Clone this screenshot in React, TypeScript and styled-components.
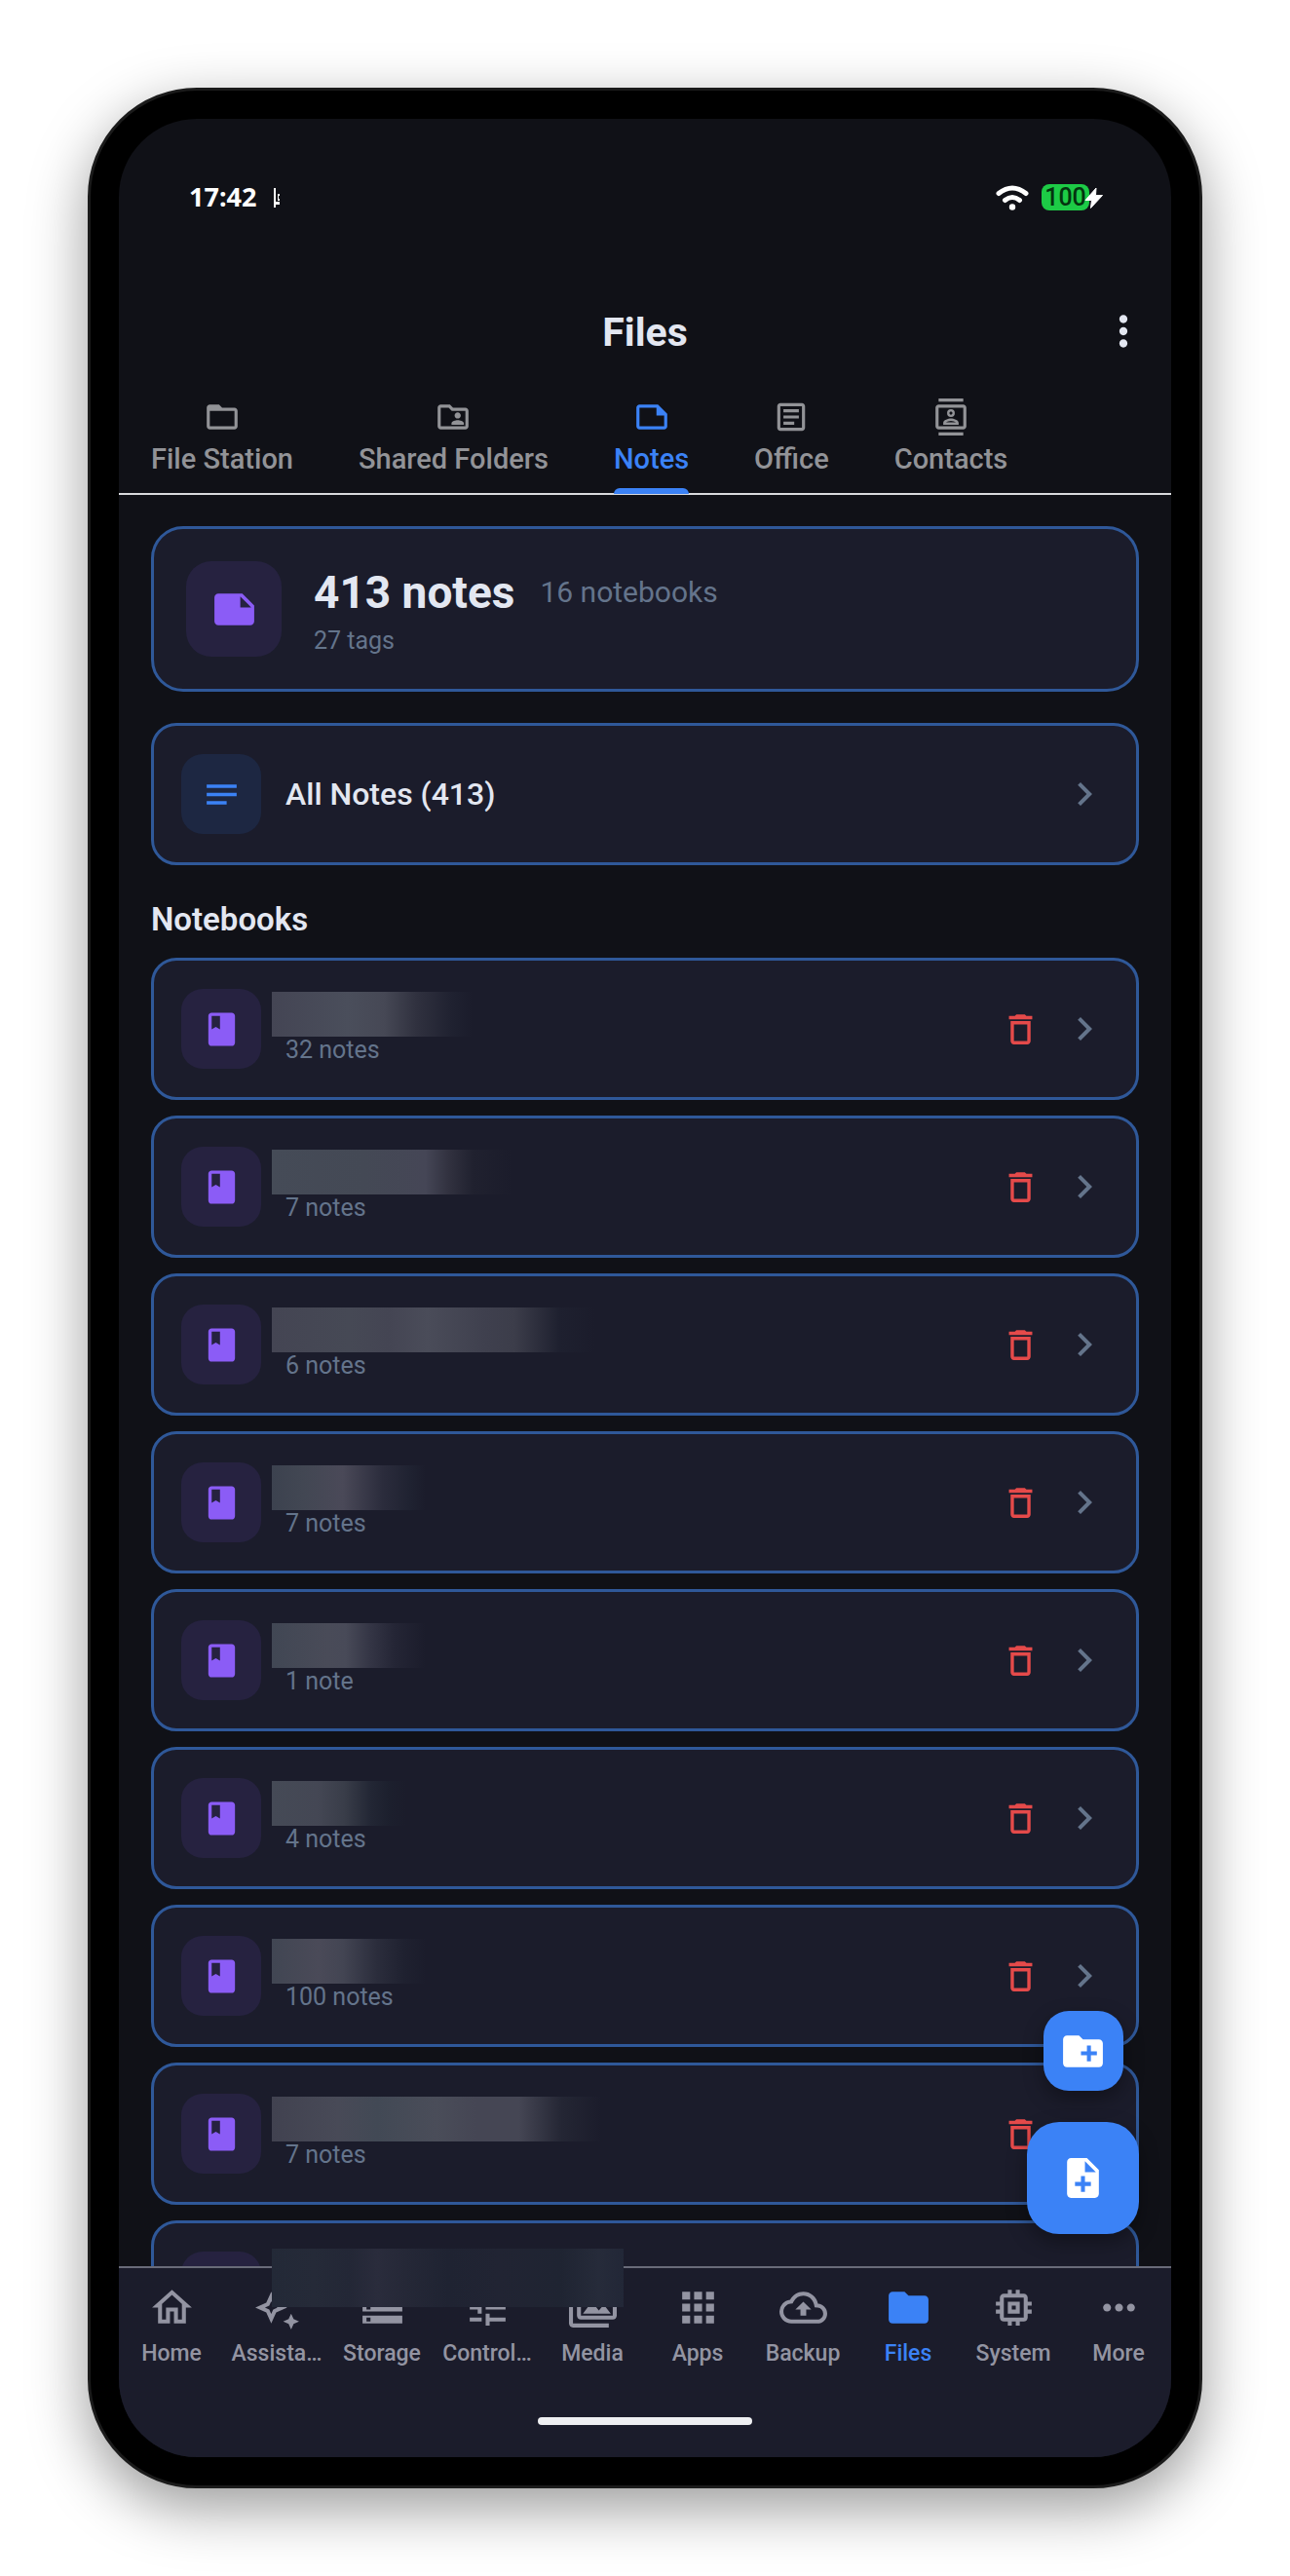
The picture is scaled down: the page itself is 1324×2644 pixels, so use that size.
import React from "react";
import styled, { createGlobalStyle } from "styled-components";
import {
  MdApps,
  MdBook,
  MdChevronRight,
  MdCreateNewFolder,
  MdFolder,
  MdFolderOpen,
  MdMemory,
  MdMoreHoriz,
  MdMoreVert,
  MdNote,
  MdNoteAdd,
  MdNotes,
  MdOutlineArticle,
  MdOutlineAutoAwesome,
  MdOutlineBackup,
  MdOutlineContacts,
  MdOutlineDelete,
  MdOutlineFolderShared,
  MdOutlineHome,
  MdOutlineNote,
  MdOutlinePermMedia,
  MdOutlineStorage,
  MdTune,
} from "react-icons/md";
import type { IconType } from "react-icons";

const color = {
  screen: "#101117",
  surface: "#1b1c2b",
  line: "#2f5899",
  text: "#e3e7f1",
  muted: "#64748b",
  primary: "#3b82f6",
  purple: "#8b5cf6",
  danger: "#e54a4a",
  tab: "#929397",
  nav: "#9394a2",
};

const GlobalStyle = createGlobalStyle`
  *, *::before, *::after { box-sizing: border-box; }
  body {
    margin: 0;
    background: #ffffff;
    font-family: Roboto, "Liberation Sans", sans-serif;
  }
  button {
    margin: 0;
    padding: 0;
    border: 0;
    background: none;
    font: inherit;
    color: inherit;
    cursor: pointer;
  }
  h1, h2, p { margin: 0; }
  svg { display: block; flex: none; }
`;

const Page = styled.div`
  padding: 90px;
`;

const Phone = styled.div`
  display: flex;
  height: calc(100vh - 180px);
  min-height: 1200px;
  padding: 29px;
  border: 3px solid #1b1b1b;
  border-radius: 112px;
  background: #000000;
  box-shadow: 0 20px 60px rgba(0, 0, 0, 0.4);
`;

const Screen = styled.div`
  position: relative;
  display: flex;
  flex: 1;
  flex-direction: column;
  min-width: 0;
  overflow: hidden;
  border-radius: 80px;
  background: ${color.screen};
  color: ${color.text};
`;

const StatusBar = styled.div`
  display: flex;
  flex: none;
  align-items: center;
  justify-content: space-between;
  height: 161px;
  padding: 0 72px;
  color: #ffffff;
`;

const StatusGroup = styled.div<{ $gap: number }>`
  display: flex;
  align-items: center;
  gap: ${(p) => p.$gap}px;
`;

const Clock = styled.span`
  padding-bottom: 2px;
  font-family: "Noto Sans", Roboto, sans-serif;
  font-size: 27px;
  font-weight: 700;
  line-height: 38px;
`;

const Battery = styled.span`
  position: relative;
  display: flex;
  align-items: center;
  justify-content: center;
  width: 49px;
  height: 27px;
  margin-right: 12px;
  border-radius: 8px;
  background: #1dcb46;
  color: #04330f;
  font-size: 25px;
  font-weight: 500;
  line-height: 27px;
`;

const Bolt = styled.svg`
  position: absolute;
  right: -15px;
  top: 2px;
`;

const AppBar = styled.header`
  display: grid;
  flex: none;
  grid-template-columns: 50px 1fr 50px;
  align-items: center;
  height: 114px;
  padding: 0 24px;
`;

const Title = styled.h1`
  grid-column: 2;
  padding-top: 2px;
  text-align: center;
  font-size: 41px;
  font-weight: 700;
  line-height: 48px;
`;

const Tabs = styled.nav`
  display: flex;
  flex: none;
  gap: 67px;
  height: 111px;
  padding: 0 33px;
  border-bottom: 2px solid #d9dadd;
`;

const Tab = styled.button<{ $active?: boolean }>`
  position: relative;
  display: flex;
  flex-direction: column;
  align-items: center;
  gap: 7px;
  padding-top: 12px;
  color: ${(p) => (p.$active ? color.primary : color.tab)};
  font-size: 29px;
  font-weight: 500;
  line-height: 34px;
  white-space: nowrap;

  &::after {
    content: "";
    position: absolute;
    right: 0;
    bottom: -1px;
    left: 0;
    height: 6px;
    border-radius: 6px 6px 0 0;
    background: ${(p) => (p.$active ? color.primary : "transparent")};
  }
`;

const Content = styled.main`
  flex: 1;
  min-height: 0;
  padding: 32px 33px 0;
  overflow: hidden;
`;

const Card = styled.section`
  display: flex;
  align-items: center;
  border: 3px solid ${color.line};
  background: ${color.surface};
`;

const SummaryCard = styled(Card)`
  height: 170px;
  padding: 0 33px;
  border-radius: 33px;
`;

const RowCard = styled(Card)`
  height: 146px;
  padding: 0 29px 0 28px;
  border-radius: 26px;
`;

const AllNotesCard = styled(RowCard)`
  margin-top: 32px;
`;

const IconTile = styled.span<{ $size: number; $tone: "purple" | "blue" }>`
  display: flex;
  flex: none;
  align-items: center;
  justify-content: center;
  width: ${(p) => p.$size}px;
  height: ${(p) => p.$size}px;
  border-radius: ${(p) => (p.$size > 90 ? 26 : 22)}px;
  background: ${(p) => (p.$tone === "purple" ? "#262240" : "#1d2742")};
  color: ${(p) => (p.$tone === "purple" ? color.purple : color.primary)};
`;

const SummaryText = styled.div`
  margin-left: 33px;
`;

const SummaryLine = styled.div`
  display: flex;
  align-items: center;
  gap: 26px;
`;

const Total = styled.span`
  font-size: 46px;
  font-weight: 700;
  line-height: 56px;
`;

const Notebooks = styled.span`
  color: ${color.muted};
  font-size: 30px;
  line-height: 36px;
`;

const Small = styled.p`
  color: ${color.muted};
  font-size: 25px;
  line-height: 27px;
`;

const SummaryTags = styled(Small)`
  margin-top: 8px;
`;

const RowTitle = styled.span`
  flex: 1;
  margin-left: 25px;
  font-size: 32px;
  font-weight: 500;
  line-height: 40px;
`;

const SectionTitle = styled.h2`
  padding: 36px 0 19px;
  font-size: 33px;
  font-weight: 600;
  line-height: 40px;
`;

const List = styled.ul`
  display: flex;
  flex-direction: column;
  gap: 16px;
  margin: 0;
  padding: 0;
  list-style: none;
`;

const Info = styled.div`
  flex: 1;
  margin-left: 11px;
  padding-bottom: 4px;
`;

const NameMask = styled.div<{ $fill: string; $width: number }>`
  width: ${(p) => p.$width}px;
  height: 46px;
  background: linear-gradient(90deg, ${(p) => p.$fill});
`;

const Count = styled(Small)`
  padding-left: 14px;
`;

const DeleteButton = styled.button`
  margin-right: 21px;
  color: ${color.danger};
`;

const ChevronButton = styled.button`
  color: ${color.muted};
`;

const FabStack = styled.div`
  position: absolute;
  right: 33px;
  bottom: 229px;
  display: flex;
  flex-direction: column;
  align-items: center;
  gap: 32px;
`;

const Fab = styled.button<{ $size: number; $radius: number }>`
  display: flex;
  align-items: center;
  justify-content: center;
  width: ${(p) => p.$size}px;
  height: ${(p) => p.$size}px;
  border-radius: ${(p) => p.$radius}px;
  background: ${color.primary};
  color: #ffffff;
  box-shadow: 0 8px 20px rgba(0, 0, 0, 0.35);
`;

const BottomBar = styled.div`
  position: relative;
  flex: none;
  height: 196px;
  border-top: 2px solid #696b79;
  background: ${color.surface};
`;

const NavItems = styled.nav`
  display: grid;
  grid-template-columns: repeat(10, minmax(0, 1fr));
  padding-top: 16px;
`;

const NavItem = styled.button<{ $active?: boolean }>`
  display: flex;
  flex-direction: column;
  align-items: center;
  gap: 8px;
  color: ${(p) => (p.$active ? color.primary : color.nav)};
  font-size: 23px;
  font-weight: 500;
  line-height: 30px;
  white-space: nowrap;
`;

const NavMask = styled.div`
  position: absolute;
  top: -20px;
  left: 157px;
  width: 361px;
  height: 60px;
  background: linear-gradient(
    90deg,
    #232937 0%,
    #252a38 12%,
    #232736 22%,
    #2a2c3c 30%,
    #252837 38%,
    #1f2332 50%,
    #212433 65%,
    #1f2432 82%,
    #262b3a 93%,
    #222737 100%
  );
`;

const HomeIndicator = styled.div`
  width: 220px;
  height: 8px;
  margin: 50px auto 0;
  border-radius: 4px;
  background: #eeeff2;
`;

type Entry = { label: string; icon: IconType; active?: boolean };

const tabs: Entry[] = [
  { label: "File Station", icon: MdFolderOpen },
  { label: "Shared Folders", icon: MdOutlineFolderShared },
  { label: "Notes", icon: MdOutlineNote, active: true },
  { label: "Office", icon: MdOutlineArticle },
  { label: "Contacts", icon: MdOutlineContacts },
];

const navItems: Entry[] = [
  { label: "Home", icon: MdOutlineHome },
  { label: "Assista…", icon: MdOutlineAutoAwesome },
  { label: "Storage", icon: MdOutlineStorage },
  { label: "Control…", icon: MdTune },
  { label: "Media", icon: MdOutlinePermMedia },
  { label: "Apps", icon: MdApps },
  { label: "Backup", icon: MdOutlineBackup },
  { label: "Files", icon: MdFolder, active: true },
  { label: "System", icon: MdMemory },
  { label: "More", icon: MdMoreHoriz },
];

type Notebook = { count?: string; width: number; fill: string };

const notebooks: Notebook[] = [
  { count: "32 notes", width: 206, fill: "#444554 0%, #4a4e5b 38%, #464855 56%, #30313f 72%, #1f2130 90%, #1b1c2b 100%" },
  { count: "7 notes", width: 246, fill: "#454b57 0%, #444955 38%, #454656 64%, #31313f 74%, #20212f 84%, #1b1c2b 100%" },
  { count: "6 notes", width: 332, fill: "#444553 0%, #464955 24%, #444553 36%, #4a4c59 48%, #3f404e 66%, #3c3d4a 75%, #1e202f 89%, #1b1c2b 100%" },
  { count: "7 notes", width: 158, fill: "#3c424f 0%, #424753 20%, #4a4958 46%, #2b2c3c 72%, #1f2231 90%, #1b1c2b 100%" },
  { count: "1 note", width: 158, fill: "#414754 0%, #494b58 36%, #484a58 48%, #343545 64%, #242535 80%, #1b1c2b 100%" },
  { count: "4 notes", width: 138, fill: "#454a56 0%, #444754 34%, #393d49 54%, #222634 74%, #1c1f2d 88%, #1b1c2b 100%" },
  { count: "100 notes", width: 158, fill: "#414653 0%, #4a4a58 30%, #434553 46%, #2b2d3c 68%, #1f2130 86%, #1b1c2b 100%" },
  { count: "7 notes", width: 338, fill: "#414250 0%, #484a57 20%, #424955 32%, #4a4d59 50%, #454654 62%, #454654 75%, #242634 88%, #1b1c2b 100%" },
  { width: 338, fill: "#1b1c2b 0%, #1b1c2b 100%" },
];

export default function App() {
  return (
    <Page>
      <GlobalStyle />
      <Phone>
        <Screen>
          <StatusBar>
            <StatusGroup $gap={18}>
              <Clock>17:42</Clock>
              <svg width="6" height="20" viewBox="0 0 6 20" aria-hidden="true">
                <path d="M0 0h2v20H0zM4 6h2v2H5v3h1v2H4zM2 14h4v3H2z" fill="#ffffff" />
              </svg>
            </StatusGroup>
            <StatusGroup $gap={13}>
              <svg width="34" height="26" viewBox="0 0 34 26" aria-label="Wi-Fi">
                <path d="M3 8.500Q17-2.500 31 8.500M9.500 15.500Q17 9.500 24.500 15.500" fill="none" stroke="#ffffff" strokeWidth="5" strokeLinecap="round" />
                <circle cx="17" cy="22.500" r="3.200" fill="#ffffff" />
              </svg>
              <Battery>
                100
                <Bolt width="22" height="24" viewBox="0 0 22 24" aria-hidden="true">
                  <path
                    d="M14 2L3 14.500h6.500L8.500 22.500 20.500 9.500h-7z"
                    fill="#ffffff"
                    stroke="#ffffff"
                    strokeWidth="1"
                    strokeLinejoin="round"
                  />
                </Bolt>
              </Battery>
            </StatusGroup>
          </StatusBar>

          <AppBar>
            <Title>Files</Title>
            <button aria-label="More options">
              <MdMoreVert size={50} />
            </button>
          </AppBar>

          <Tabs>
            {tabs.map(({ label, icon: Icon, active }) => (
              <Tab key={label} $active={active}>
                <Icon size={38} />
                {label}
              </Tab>
            ))}
          </Tabs>

          <Content>
            <SummaryCard>
              <IconTile $size={98} $tone="purple">
                <MdNote size={49} />
              </IconTile>
              <SummaryText>
                <SummaryLine>
                  <Total>413 notes</Total>
                  <Notebooks>16 notebooks</Notebooks>
                </SummaryLine>
                <SummaryTags>27 tags</SummaryTags>
              </SummaryText>
            </SummaryCard>

            <AllNotesCard>
              <IconTile $size={82} $tone="blue">
                <MdNotes size={41} />
              </IconTile>
              <RowTitle>All Notes (413)</RowTitle>
              <ChevronButton aria-label="Open all notes">
                <MdChevronRight size={48} />
              </ChevronButton>
            </AllNotesCard>

            <SectionTitle>Notebooks</SectionTitle>
            <List>
              {notebooks.map((book, index) => (
                <li key={index}>
                  <RowCard>
                    <IconTile $size={82} $tone="purple">
                      <MdBook size={41} />
                    </IconTile>
                    <Info>
                      <NameMask $fill={book.fill} $width={book.width} />
                      {book.count && <Count>{book.count}</Count>}
                    </Info>
                    <DeleteButton aria-label="Delete notebook">
                      <MdOutlineDelete size={41} />
                    </DeleteButton>
                    <ChevronButton aria-label="Open notebook">
                      <MdChevronRight size={48} />
                    </ChevronButton>
                  </RowCard>
                </li>
              ))}
            </List>
          </Content>

          <BottomBar>
            <NavItems>
              {navItems.map(({ label, icon: Icon, active }) => (
                <NavItem key={label} $active={active}>
                  <Icon size={49} />
                  {label}
                </NavItem>
              ))}
            </NavItems>
            <NavMask />
            <HomeIndicator />
          </BottomBar>

          <FabStack>
            <Fab $size={82} $radius={26} aria-label="New notebook">
              <MdCreateNewFolder size={49} />
            </Fab>
            <Fab $size={115} $radius={33} aria-label="New note">
              <MdNoteAdd size={49} />
            </Fab>
          </FabStack>
        </Screen>
      </Phone>
    </Page>
  );
}
